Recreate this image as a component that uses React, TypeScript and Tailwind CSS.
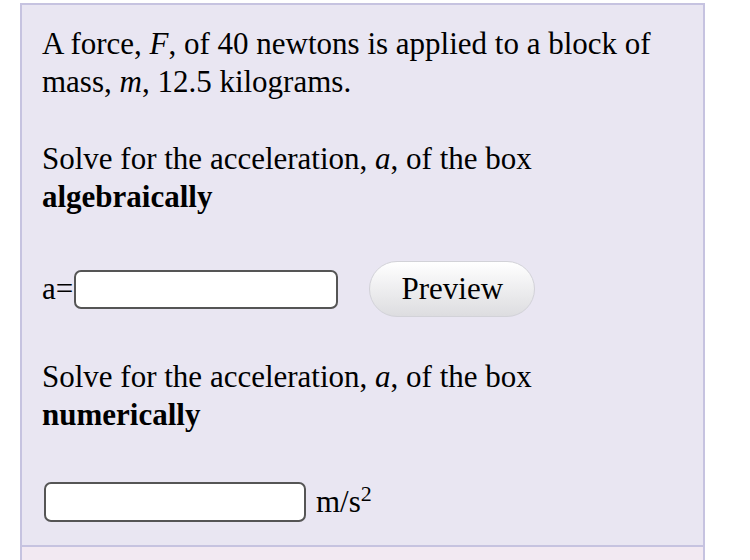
import React from 'react';

const serif = { fontFamily: '"Liberation Serif", "Times New Roman", serif' };

const App: React.FC = () => {
  return (
    <div className="w-[750px] h-[560px] bg-white overflow-hidden text-black" style={serif}>
      <div className="ml-[20px] w-[685px] mt-[3px] border-t-[2px] border-x-[2px] border-[#c6c3e0] bg-[#e9e6f2]">
        <div className="pl-[20px] pr-[20px] pt-[20px] pb-[23px] text-[31px] leading-[38px]">
          <p>
            A force, <i>F</i>, of 40 newtons is applied to a block of mass, <i>m</i>, 12.5 kilograms.
          </p>
          <p className="mt-[39px]">
            Solve for the acceleration, <i>a</i>, of the box <b>algebraically</b>
          </p>
          <div className="mt-[45px] flex items-center">
            <span>a=</span>
            <input
              className="ml-[1px] w-[264px] h-[39px] bg-white border-[2px] border-[#555] rounded-[7px] outline-none"
              type="text"
            />
            <button className="ml-[31px] w-[166px] h-[56px] rounded-full border border-[#d2d2d8] bg-gradient-to-b from-white to-[#dddde0] text-[31px]">
              Preview
            </button>
          </div>
          <p className="mt-[41px]">
            Solve for the acceleration, <i>a</i>, of the box <b>numerically</b>
          </p>
          <div className="mt-[48px] flex items-center">
            <input
              className="ml-[2px] w-[262px] h-[40px] bg-white border-[2px] border-[#555] rounded-[7px] outline-none"
              type="text"
            />
            <span className="ml-[10px]">
              m/s<sup className="text-[22px]">2</sup>
            </span>
          </div>
        </div>
      </div>
      <div className="ml-[20px] w-[685px] h-[20px] border-t-[2px] border-x-[2px] border-[#c6c3e0] bg-[#f2e9f2]" />
    </div>
  );
};

export default App;
